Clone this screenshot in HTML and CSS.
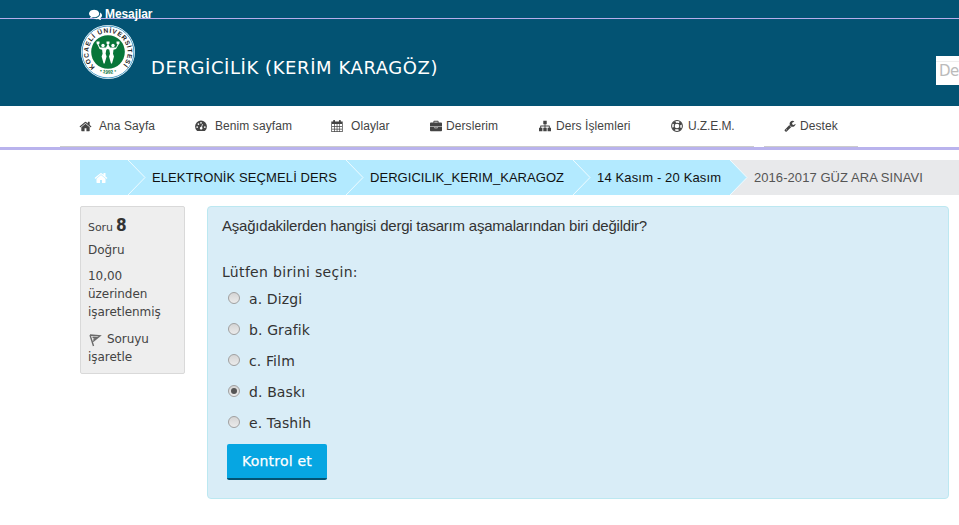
FILE: index.html
```html
<!DOCTYPE html>
<html lang="tr">
<head>
<meta charset="utf-8">
<title>2016-2017 GÜZ ARA SINAVI</title>
<link rel="stylesheet" href="styles.css">
</head>
<body>
<svg class="defs" width="0" height="0">
  <symbol id="home" viewBox="0 0 1792 1792"><path d="M1472 992v480q0 26-19 45t-45 19h-384v-384h-256v384h-384q-26 0-45-19t-19-45v-480q0-1 .5-3t.5-3l575-474 575 474q1 2 1 6zm223-69l-62 74q-8 9-21 11h-3q-13 0-21-7l-692-577-692 577q-12 8-24 7-13-2-21-11l-62-74q-8-10-7-23.500t11-21.500l719-599q32-26 76-26t76 26l244 204v-195q0-14 9-23t23-9h192q14 0 23 9t9 23v408l219 182q10 8 11 21.500t-7 23.500z"/></symbol>
</svg>
<div class="topbar">
  <a class="messages"><svg class="chat" viewBox="0 0 1792 1792"><path d="M1408 768q0 139-94 257t-256.500 186.500-353.500 68.500q-86 0-176-16-124 88-278 128-36 9-86 16h-3q-11 0-20.500-8t-11.500-21q-1-3-1-6.500t.5-6.500 2-6l2.500-5 3.500-5.500 4-5 4.500-5 4-4.500q5-6 23-25t26-29.500 22.500-29 25-38.500 20.500-44q-124-72-195-177t-71-224q0-139 94-257t256.500-186.500 353.500-68.500 353.500 68.500 256.500 186.500 94 257zm384 256q0 120-71 224.500t-195 176.500q10 24 20.500 44t25 38.500 22.500 29 26 29.500 23 25q1 1 4 4.500t4.500 5 4 5 3.500 5.500l2.500 5 2 6 .5 6.500-1 6.500q-3 14-13 22t-22 7q-50-7-86-16-154-40-278-128-90 16-176 16-271 0-472-132 58 4 88 4 161 0 309-45t264-129q125-92 192-212t67-254q0-77-23-152 129 71 204 178t75 230z"/></svg>Mesajlar</a>
</div>
<header class="header">
  <svg class="logo" viewBox="0 0 56 56">
    <defs><path id="ring" d="M15 43A19.600 19.600 0 1 1 41 43"/><path id="yr" d="M16 46.200A21.800 21.800 0 0 0 40 46.200"/></defs>
    <circle cx="28" cy="28" r="27" fill="#fff"/>
    <circle cx="28" cy="28" r="25.900" fill="none" stroke="#4b9fc9" stroke-width="1"/>
    <circle cx="28" cy="28" r="16.800" fill="#08763a"/>
    <text class="logo-name"><textPath href="#ring" textLength="91">KOCAELİ ÜNİVERSİTESİ</textPath></text>
    <text class="logo-year"><textPath href="#yr" startOffset="50%" text-anchor="middle">• 1992 •</textPath></text>
    <g fill="#fff"><circle cx="23" cy="21.500" r="1.700"/><circle cx="33" cy="21.500" r="1.700"/><path d="M16.500 17.500h3v2l-1 1 1.500 3h6l1.500-3-1-1v-2h3v2l-1 1 1.500 3h6l1.500-3-1-1v-2h3v2l-1 1.200-2.500 4.300-2.500.8-.5 4 1 2.700-2 7h-1l-2-7 1-2.700-.7-4-1.500-.8-1.500.8-.7 4 1 2.700-2 7h-1l-2-7 1-2.700-.5-4-2.500-.8-2-4.300-1-1.200z"/></g>
  </svg>
  <h1 class="title">DERGİCİLİK (KERİM KARAGÖZ)</h1>
  <div class="search"><span>De</span></div>
</header>
<nav class="nav">
  <div class="group main">
    <a class="item home"><svg class="ico"><use href="#home"/></svg>Ana Sayfa</a>
    <a class="item page"><svg class="ico" viewBox="0 0 14 14"><path fill-rule="evenodd" d="M2 12.300A6.900 6.900 0 1 1 12 12.300Q11.800 12.700 11.300 12.700H2.700Q2.200 12.700 2 12.300zM1.500 8.300a1 1 0 1 0 2 0 1 1 0 1 0-2 0zM3 4.800a1 1 0 1 0 2 0 1 1 0 1 0-2 0zM6 3.300a1 1 0 1 0 2 0 1 1 0 1 0-2 0zM10.500 8.300a1 1 0 1 0 2 0 1 1 0 1 0-2 0zM8.300 4.600L7.400 8Q6 8 5.700 9.200C5.500 10.300 6 11 7 11.200c1.300 0 1.900-1 1.700-1.900Q8.600 8.700 8.200 8.300L9.100 4.900z"/></svg>Benim sayfam</a>
    <a class="item events"><svg class="ico" viewBox="0 0 12 12"><path fill-rule="evenodd" d="M.3 1.500h1.900V.5Q2.200 0 2.700 0h.8q.5 0 .5.500v1h4v-1Q8 0 8.500 0h.8q.5 0 .5.500v1h1.900V12H.3zM1 4v2h2V4zm2.700 0v2h2V4zm2.700 0v2h2V4zM9 4v2h2V4zM1 6.700v2h2v-2zm2.700 0v2h2v-2zm2.700 0v2h2v-2zm2.600 0v2h2v-2zM1 9.400v1.900h2V9.400zm2.700 0v1.900h2V9.400zm2.700 0v1.900h2V9.400zm2.600 0v1.900h2V9.400z"/></svg>Olaylar</a>
    <a class="item courses"><svg class="ico" viewBox="0 0 14 14"><path fill-rule="evenodd" d="M4 3V1.700Q4 1 4.700 1h4.600q.7 0 .7.700V3h3q1 0 1 1v3.500H0V4q0-1 1-1zm1 0h4V2H5zM0 8.300h5.300v1.200h3.400V8.300H14V12q0 1-1 1H1q-1 0-1-1zM6 8.300h2v.700H6z"/></svg>Derslerim</a>
    <a class="item tasks"><svg class="ico" viewBox="0 0 14 14"><path d="M5 1h4v4H7.500v1.500H12q.6 0 .6.600V9H14v4h-4V9h1.500V7.500h-4V9H9v4H5V9h1.500V7.500h-4V9H4v4H0V9h1.400V7.100q0-.6.600-.6h4.500V5H5z"/></svg>Ders İşlemleri</a>
    <a class="item uzem"><svg class="ico" viewBox="0 0 14 14"><g fill="none" stroke="#444"><circle cx="7" cy="7" r="6.300" stroke-width="1.200"/><circle cx="7" cy="7" r="3.300" stroke-width="1.200"/><circle cx="7" cy="7" r="4.900" stroke-width="2.600" stroke-dasharray="3.400 4.297" stroke-dashoffset="-2.150"/></g></svg>U.Z.E.M.</a>
  </div>
  <div class="group side">
    <a class="item support"><svg class="ico" viewBox="0 0 1792 1792"><path d="M448 1472q0-26-19-45t-45-19-45 19-19 45 19 45 45 19 45-19 19-45zm644-420l-682 682q-37 37-90 37-52 0-91-37l-106-108q-38-36-38-90 0-53 38-91l681-681q39 98 114.500 173.500t173.500 114.500zm634-435q0 39-23 106-47 134-164.500 217.500t-258.500 83.500q-185 0-316.500-131.500t-131.500-316.500 131.500-316.500 316.500-131.500q58 0 121.500 16.500t107.500 46.500q16 11 16 28t-16 28l-293 169v224l193 107q5-3 79-48.500t135.500-81 70.500-35.500q15 0 23.500 10t8.500 25z"/></svg>Destek</a>
  </div>
</nav>
<div class="crumbs">
  <a class="crumb c1"><svg class="ico"><use href="#home"/></svg></a><svg class="arrow" viewBox="0 0 18 35"><path d="M0 0l17 17.500L0 35"/></svg>
  <a class="crumb c2">ELEKTRONİK SEÇMELİ DERS</a><svg class="arrow" viewBox="0 0 18 35"><path d="M0 0l17 17.500L0 35"/></svg>
  <a class="crumb c3">DERGICILIK_KERIM_KARAGOZ</a><svg class="arrow" viewBox="0 0 18 35"><path d="M0 0l17 17.500L0 35"/></svg>
  <a class="crumb c4">14 Kasım - 20 Kasım</a><svg class="arrow last" viewBox="0 0 18 35"><path d="M0 0l17 17.500L0 35"/></svg>
  <span class="current">2016-2017 GÜZ ARA SINAVI</span>
</div>
<main class="question">
  <aside class="info">
    <h3 class="no">Soru <b>8</b></h3>
    <div class="state">Doğru</div>
    <div class="grade">10,00<br>üzerinden<br>işaretlenmiş</div>
    <div class="flag"><svg viewBox="0 0 14 14"><path d="M2 2l3.500 11M2 2l10 .8L5 8.500M4.500 4.300l3.500.3-2.500 2" fill="none" stroke="#6a6a6a" stroke-width="1.400"/></svg>Soruyu<br>işaretle</div>
  </aside>
  <section class="panel">
    <p class="text">Aşağıdakilerden hangisi dergi tasarım aşamalarından biri değildir?</p>
    <p class="prompt">Lütfen birini seçin:</p>
    <div class="answers">
      <label><i class="radio"></i>a. Dizgi</label>
      <label><i class="radio"></i>b. Grafik</label>
      <label><i class="radio"></i>c. Film</label>
      <label><i class="radio on"></i>d. Baskı</label>
      <label><i class="radio"></i>e. Tashih</label>
    </div>
    <button class="check">Kontrol et</button>
  </section>
</main>
</body>
</html>
```
FILE: styles.css
```css
* { box-sizing: border-box; }
body { margin: 0; width: 959px; height: 525px; overflow: hidden; background: #fff; color: #333; font-family: "DejaVu Sans", sans-serif; }
h1, h3, p { margin: 0; font-weight: normal; }
.defs { display: block; }
.topbar { height: 19px; background: #035373; border-bottom: 1px solid #b7aeeb; padding: 7px 0 0 89px; }
.messages { display: flex; align-items: center; height: 14px; color: #fff; font: bold 12px/14px "Liberation Sans", sans-serif; letter-spacing: -.08px; }
.chat { width: 13px; height: 13px; margin-right: 3px; fill: #fff; }
.header { height: 87px; background: #035373; display: flex; align-items: flex-start; overflow: hidden; }
.logo { flex: none; width: 56px; height: 56px; margin: 5px 0 0 80px; }
.logo-name { font: bold 6.500px "Liberation Sans", sans-serif; fill: #222; }
.logo-year { font: bold 5px "Liberation Sans", sans-serif; fill: #08763a; }
.title { flex: none; margin: 37px 0 0 15px; width: 785px; font-size: 18px; line-height: 24px; letter-spacing: .58px; color: #fff; white-space: nowrap; }
.search { flex: none; width: 170px; height: 29px; margin-top: 37px; background: #fff; padding-top: 5px; }
.search span { display: block; border-top: 1px solid #eee; padding-left: 3px; color: #bbb; font: 15px/19px "DejaVu Sans", sans-serif; letter-spacing: -.5px; }
.nav { height: 44px; display: flex; gap: 10px; padding-left: 60px; border-bottom: 3px solid #b9b3ed; }
.group { display: flex; height: 41px; border-bottom: 1px solid #ccc; padding-left: 20px; }
.main { width: 694px; }
.side { width: 94px; }
.item { display: flex; align-items: center; flex: none; height: 40px; white-space: nowrap; font: 12px/16px "Liberation Sans", sans-serif; color: #444; letter-spacing: .08px; }
.ico { width: 12px; height: 12px; fill: #444; flex: none; margin-right: 4px; }
.home { width: 115px; }
.home .ico, .page .ico, .events .ico { margin-right: 8px; }
.home .ico { width: 13px; height: 13px; margin: 0 7px 0 -1px; }
.page { width: 136px; }
.events { width: 99px; }
.courses { width: 109px; }
.tasks { width: 132px; }
.tasks .ico, .uzem .ico { margin-right: 5px; }
.uzem { letter-spacing: -.1px; }
.crumbs { display: flex; height: 35px; margin: 10px 0 0 80px; background: #e8e9eb; }
.crumb { display: flex; align-items: center; flex: none; background: #b3eaff; color: #111; font: 13px/16px "Liberation Sans", sans-serif; letter-spacing: .05px; white-space: nowrap; padding-top: 1px; }
.c1 { width: 48px; padding-left: 14px; }
.c1 .ico { width: 14px; height: 14px; fill: #fff; }
.c2 { width: 200px; padding-left: 6px; letter-spacing: .1px; }
.c3 { width: 209px; padding-left: 6px; }
.c4 { width: 139px; padding-left: 6px; letter-spacing: .15px; }
.arrow { width: 18px; height: 35px; flex: none; background: #b3eaff; fill: none; stroke: #effbff; stroke-width: 1; }
.last { background: none; fill: #b3eaff; }
.current { padding-left: 6px; font: 13px/36px "Liberation Sans", sans-serif; letter-spacing: .06px; color: #555; white-space: nowrap; }
.question { display: flex; gap: 22px; margin: 11px 0 0 80px; }
.info { width: 105px; height: 168px; background: #eee; border: 1px solid #d9d9d9; border-radius: 2px; padding: 8px 7px; font-size: 12px; line-height: 18px; letter-spacing: -.05px; color: #444; }
.no { font-size: 11px; line-height: 20px; letter-spacing: -.1px; }
.no b { font-size: 18px; letter-spacing: -1px; color: #333; display: inline-block; transform: scaleX(.85); transform-origin: left; }
.state { margin-top: 3px; }
.grade { margin-top: 8px; }
.flag { margin-top: 9px; }
.flag svg { width: 14px; height: 14px; margin-right: 5px; vertical-align: -4px; }
.panel { width: 742px; height: 293px; background: #d9edf7; border: 1px solid #bce8f1; border-radius: 4px; padding: 9px 14px; }
.text { font: 15px/20px "Liberation Sans", sans-serif; letter-spacing: -.22px; }
.prompt { margin-top: 26px; font-size: 14px; line-height: 20px; letter-spacing: .32px; }
.answers { margin-top: 1px; font-size: 14px; }
.answers label { display: flex; align-items: center; height: 31px; letter-spacing: .12px; }
.radio { width: 12px; height: 12px; margin: -1px 9px 0 6px; border: 1px solid #a0a0a0; border-radius: 50%; background: linear-gradient(#d5d5d5, #ebebeb); display: flex; align-items: center; justify-content: center; }
.on::after { content: ""; width: 6px; height: 6px; border-radius: 50%; background: #555; }
.check { display: block; margin: 6px 0 0 5px; width: 100px; height: 36px; border: 0; border-bottom: 2px solid #035373; border-radius: 2px; background: #06a6e2; color: #fff; padding: 1px 0 0; font: 14px/33px "DejaVu Sans", sans-serif; letter-spacing: .2px; -webkit-text-stroke: .25px #fff; }
```
